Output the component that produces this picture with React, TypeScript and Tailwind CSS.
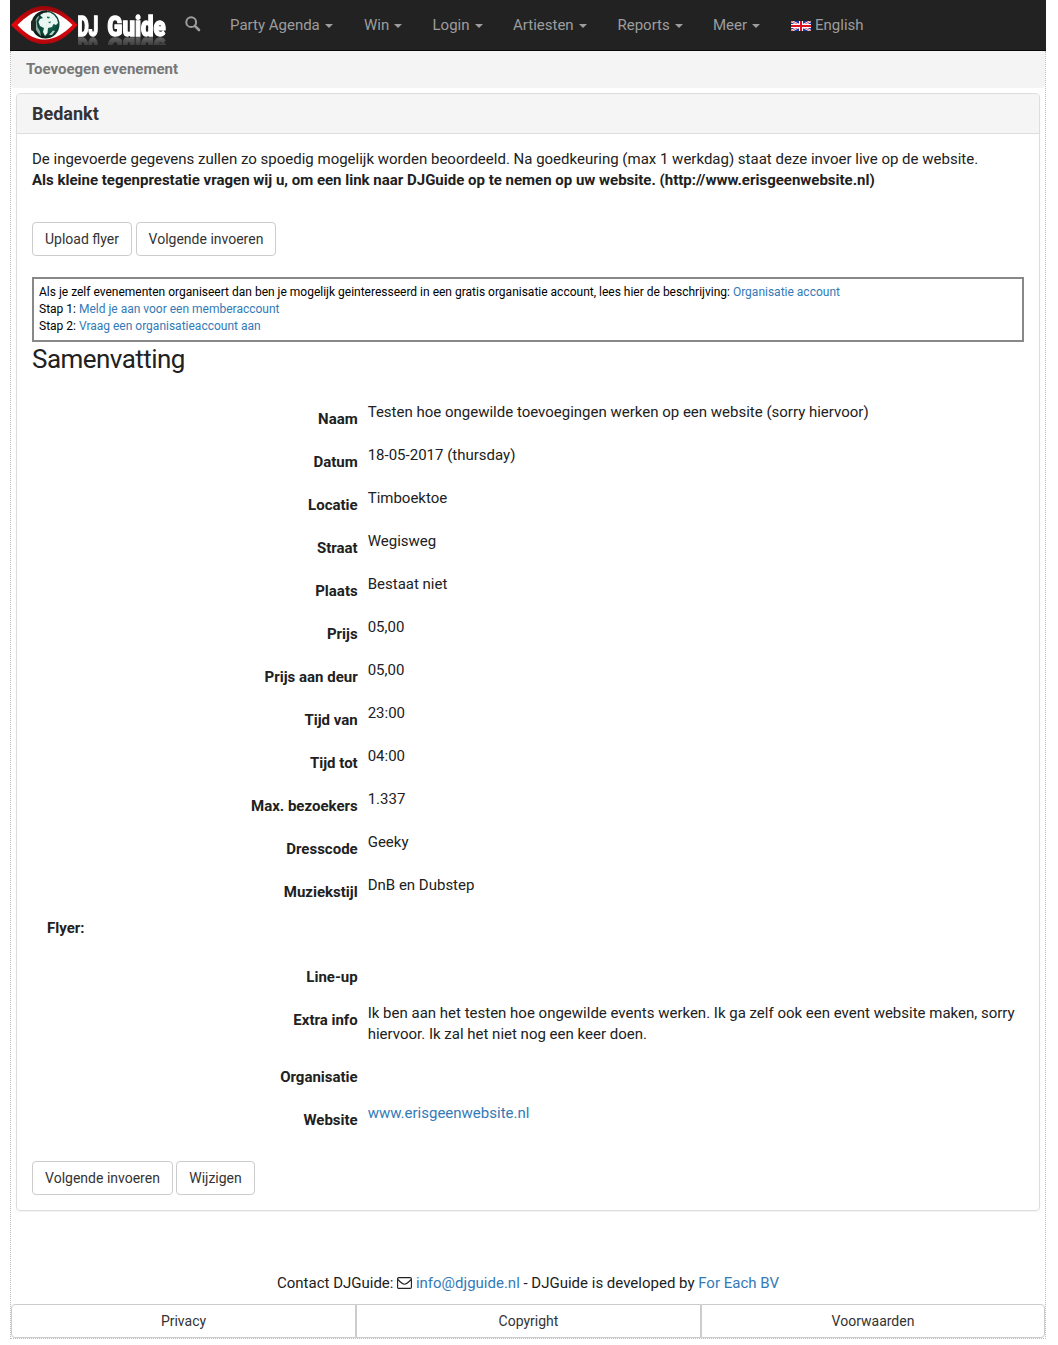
import React from "react";

const navItems = [
  { label: "Party Agenda", width: "w-[134px]" },
  { label: "Win", width: "w-[68.5px]" },
  { label: "Login", width: "w-[80.5px]" },
  { label: "Artiesten", width: "w-[104.5px]" },
  { label: "Reports", width: "w-[95.5px]" },
  { label: "Meer", width: "w-[78px]" },
];

const details: [string, string][] = [
  ["Naam", "Testen hoe ongewilde toevoegingen werken op een website (sorry hiervoor)"],
  ["Datum", "18-05-2017 (thursday)"],
  ["Locatie", "Timboektoe"],
  ["Straat", "Wegisweg"],
  ["Plaats", "Bestaat niet"],
  ["Prijs", "05,00"],
  ["Prijs aan deur", "05,00"],
  ["Tijd van", "23:00"],
  ["Tijd tot", "04:00"],
  ["Max. bezoekers", "1.337"],
  ["Dresscode", "Geeky"],
  ["Muziekstijl", "DnB en Dubstep"],
];

function Logo() {
  return (
    <div className="flex h-[50px] w-[160px] shrink-0">
      <svg width="67" height="50" viewBox="0 0 67 50" className="block shrink-0">
        <defs>
          <linearGradient id="lid" x1="0" y1="0" x2="0" y2="1">
            <stop offset="0" stopColor="#970509" />
            <stop offset="0.5" stopColor="#e0080d" />
            <stop offset="1" stopColor="#b3060b" />
          </linearGradient>
          <radialGradient id="globe" cx="0.6" cy="0.45" r="0.6">
            <stop offset="0" stopColor="#14735c" />
            <stop offset="0.6" stopColor="#0b4a3b" />
            <stop offset="1" stopColor="#061510" />
          </radialGradient>
        </defs>
        <path d="M1 25 C12 13 22 6 34 6 C47 6 57 14 67.500 25 C57 37 47 44 34 44 C21 44 12 36 1 25Z" fill="url(#lid)" />
        <path d="M7.500 25 C16 17 23 10.500 34 10.500 C45 10.500 54 17 62.500 25 C54 33 46 39.500 34 39.500 C23 39.500 15 33 7.500 25Z" fill="#fff" />
        <circle cx="35.500" cy="24.500" r="14" fill="url(#globe)" />
        <path d="M30 15 L35 12 L40 12.500 L44 15 L47 19 L48 23 L46 25 L43.500 24 L42 27 L38 28 L37.500 33 L35 36 L33 32 L34 28 L30 26 L28.500 22 L30 19 L33 18Z" fill="#e9f5f0" />
        <path d="M37 16.500 L40 17 L39 18.500 L37 18Z M38 22 L41 21.500 L40 23.500Z" fill="#14735c" />
        <path d="M25 18 L28 15 L29 17 L26.500 21 L27.500 27 L30 31 L31 36 L28 33 L25.500 29Z" fill="#8faaa0" />
        <path d="M39 35 L43 30.500 L45 31 L42 35Z" fill="#b9d2c9" />
        <path d="M37 11.500 C27 11.500 23 20 23.500 27" fill="none" stroke="#17201d" strokeWidth="2" />
        <rect x="21" y="20" width="5" height="11" rx="2" fill="#222b28" />
      </svg>
      <div className="h-[37px] w-[93px] [-webkit-box-reflect:below_0px_linear-gradient(transparent_78%,rgba(255,255,255,0.13)_78%,rgba(255,255,255,0.3))]">
        <svg width="93" height="37" viewBox="0 0 93 37" className="block">
          <g fontFamily="Roboto, sans-serif" fontWeight="900" fill="#fff" stroke="#fff" strokeWidth="1.300">
            <text transform="translate(0.4 35.6) scale(0.62 1)" fontSize="28">DJ</text>
            <text transform="translate(30.300 35.6) scale(0.73 1)" fontSize="28" textLength="80" lengthAdjust="spacingAndGlyphs">Guide</text>
          </g>
        </svg>
      </div>
    </div>
  );
}

function Flag() {
  return (
    <svg width="20" height="10" viewBox="0 0 20 10" className="mr-1 mt-px block">
      <rect width="20" height="10" fill="#1c3ba3" />
      <path d="M0 0L20 10M20 0L0 10" stroke="#fff" strokeWidth="2.200" />
      <path d="M0 0L20 10M20 0L0 10" stroke="#e0182d" strokeWidth="0.700" />
      <path d="M10 0V10M0 5H20" stroke="#fff" strokeWidth="4" />
      <path d="M10 0V10M0 5H20" stroke="#dc1020" strokeWidth="2" />
    </svg>
  );
}

function Button({ children, className }: { children: React.ReactNode; className: string }) {
  return (
    <button className={`h-[34px] rounded border border-[#ccc] bg-white text-sm text-[#333] ${className}`}>
      {children}
    </button>
  );
}

function Row({ label, children }: { label: string; children?: React.ReactNode }) {
  return (
    <div className="mb-[15px] flex min-h-7">
      <div className="w-[325.7px] shrink-0 pt-[7px] text-right font-bold">{label}</div>
      <div className="ml-[10px] w-[657px]">{children}</div>
    </div>
  );
}

export default function App() {
  return (
    <div className="h-[1345px] w-[1058px] bg-white pl-[10px] font-['Roboto',sans-serif] text-[15px] leading-[21px] text-[#212121]">
      <div className="flex h-[1339px] w-[1036px] flex-col">
        <nav className="flex h-[51px] shrink-0 border-b border-[#080808] bg-[#222] text-[#9d9d9d]">
          <Logo />
          <div className="w-[60px] shrink-0 pl-[15px] pt-4">
            <svg width="16" height="16" viewBox="0 0 16 16" fill="none" stroke="#9d9d9d">
              <circle cx="6.200" cy="6.200" r="4.900" strokeWidth="2" />
              <path d="M9.800 9.800L14 14" strokeWidth="2.600" strokeLinecap="round" />
            </svg>
          </div>
          {navItems.map((item) => (
            <a key={item.label} className={`flex h-[50px] shrink-0 items-center ${item.width}`}>
              {item.label}
              <span className="ml-[5px] mt-[2px] border-x-4 border-t-4 border-x-transparent border-t-[#9d9d9d]" />
            </a>
          ))}
          <a className="flex h-[50px] items-center">
            <Flag />
            English
          </a>
        </nav>

        <div className="flex flex-1 flex-col border-x border-b border-dotted border-[#bbb]">
          <div className="h-[37px] rounded-b bg-[#f4f4f4] pl-[15px] pt-[8px] font-bold text-[#777]">Toevoegen evenement</div>

          <section className="mx-[5px] mt-[5px] h-[1118px] rounded border border-[#ddd] shadow-[0_1px_1px_rgba(0,0,0,0.05)]">
            <h1 className="h-10 rounded-t-[3px] border-b border-[#ddd] bg-[#f5f5f5] px-[15px] pt-[9px] text-[18px] font-bold leading-[21px] text-[#333]">
              Bedankt
            </h1>
            <div className="px-[15px] pt-[15px]">
              <p>De ingevoerde gegevens zullen zo spoedig mogelijk worden beoordeeld. Na goedkeuring (max 1 werkdag) staat deze invoer live op de website.</p>
              <p className="font-bold">Als kleine tegenprestatie vragen wij u, om een link naar DJGuide op te nemen op uw website. (http://www.erisgeenwebsite.nl)</p>
              <div className="mt-[31px] flex gap-1">
                <Button className="w-[100px]">Upload flyer</Button>
                <Button className="w-[140px]">Volgende invoeren</Button>
              </div>
              <div className="mt-[21px] h-[65px] border-2 border-[#888] px-[5px] pt-[5px] text-xs leading-[17px] text-black">
                <p>
                  Als je zelf evenementen organiseert dan ben je mogelijk geinteresseerd in een gratis organisatie account, lees hier de beschrijving:{" "}
                  <a className="text-[#337ab7]">Organisatie account</a>
                </p>
                <p>Stap 1: <a className="text-[#337ab7]">Meld je aan voor een memberaccount</a></p>
                <p>Stap 2: <a className="text-[#337ab7]">Vraag een organisatieaccount aan</a></p>
              </div>
              <h2 className="mb-[27px] mt-px h-8 text-[26px] leading-8 tracking-[-0.55px]">Samenvatting</h2>

              {details.map(([label, value]) => (
                <Row key={label} label={label}>{value}</Row>
              ))}
              <div className="mb-[21px] pl-[15px] font-bold">Flyer:</div>
              <Row label="Line-up" />
              <Row label="Extra info">
                Ik ben aan het testen hoe ongewilde events werken. Ik ga zelf ook een event website maken, sorry hiervoor. Ik zal het niet nog een keer doen.
              </Row>
              <Row label="Organisatie" />
              <Row label="Website">
                <a className="text-[#337ab7]">www.erisgeenwebsite.nl</a>
              </Row>
              <div className="mt-[30px] flex gap-[3px]">
                <Button className="w-[141px]">Volgende invoeren</Button>
                <Button className="w-[79px]">Wijzigen</Button>
              </div>
            </div>
          </section>

          <footer className="mt-auto">
            <p className="mb-[10px] text-center">
              Contact DJGuide:{" "}
              <svg width="15" height="12" viewBox="0 0 15 12" fill="none" stroke="#212121" strokeWidth="1.100" className="inline-block align-[-1px]">
                <rect x="0.600" y="0.600" width="13.800" height="10.800" rx="1.200" />
                <path d="M0.800 2.500C3 4.700 5.600 7.200 7.500 7.200S12 4.700 14.200 2.500" />
              </svg>
              {" "}<a className="text-[#337ab7]">info@djguide.nl</a>{" - DJGuide is developed by "}
              <a className="text-[#337ab7]">For Each BV</a>
            </p>
            <div className="grid h-[34px] grid-cols-[345px_345px_344px] text-center text-sm leading-8 text-[#333]">
              <a className="rounded-l border border-[#ccc]">Privacy</a>
              <a className="border border-[#ccc]">Copyright</a>
              <a className="rounded-r border border-[#ccc]">Voorwaarden</a>
            </div>
          </footer>
        </div>
      </div>
    </div>
  );
}
